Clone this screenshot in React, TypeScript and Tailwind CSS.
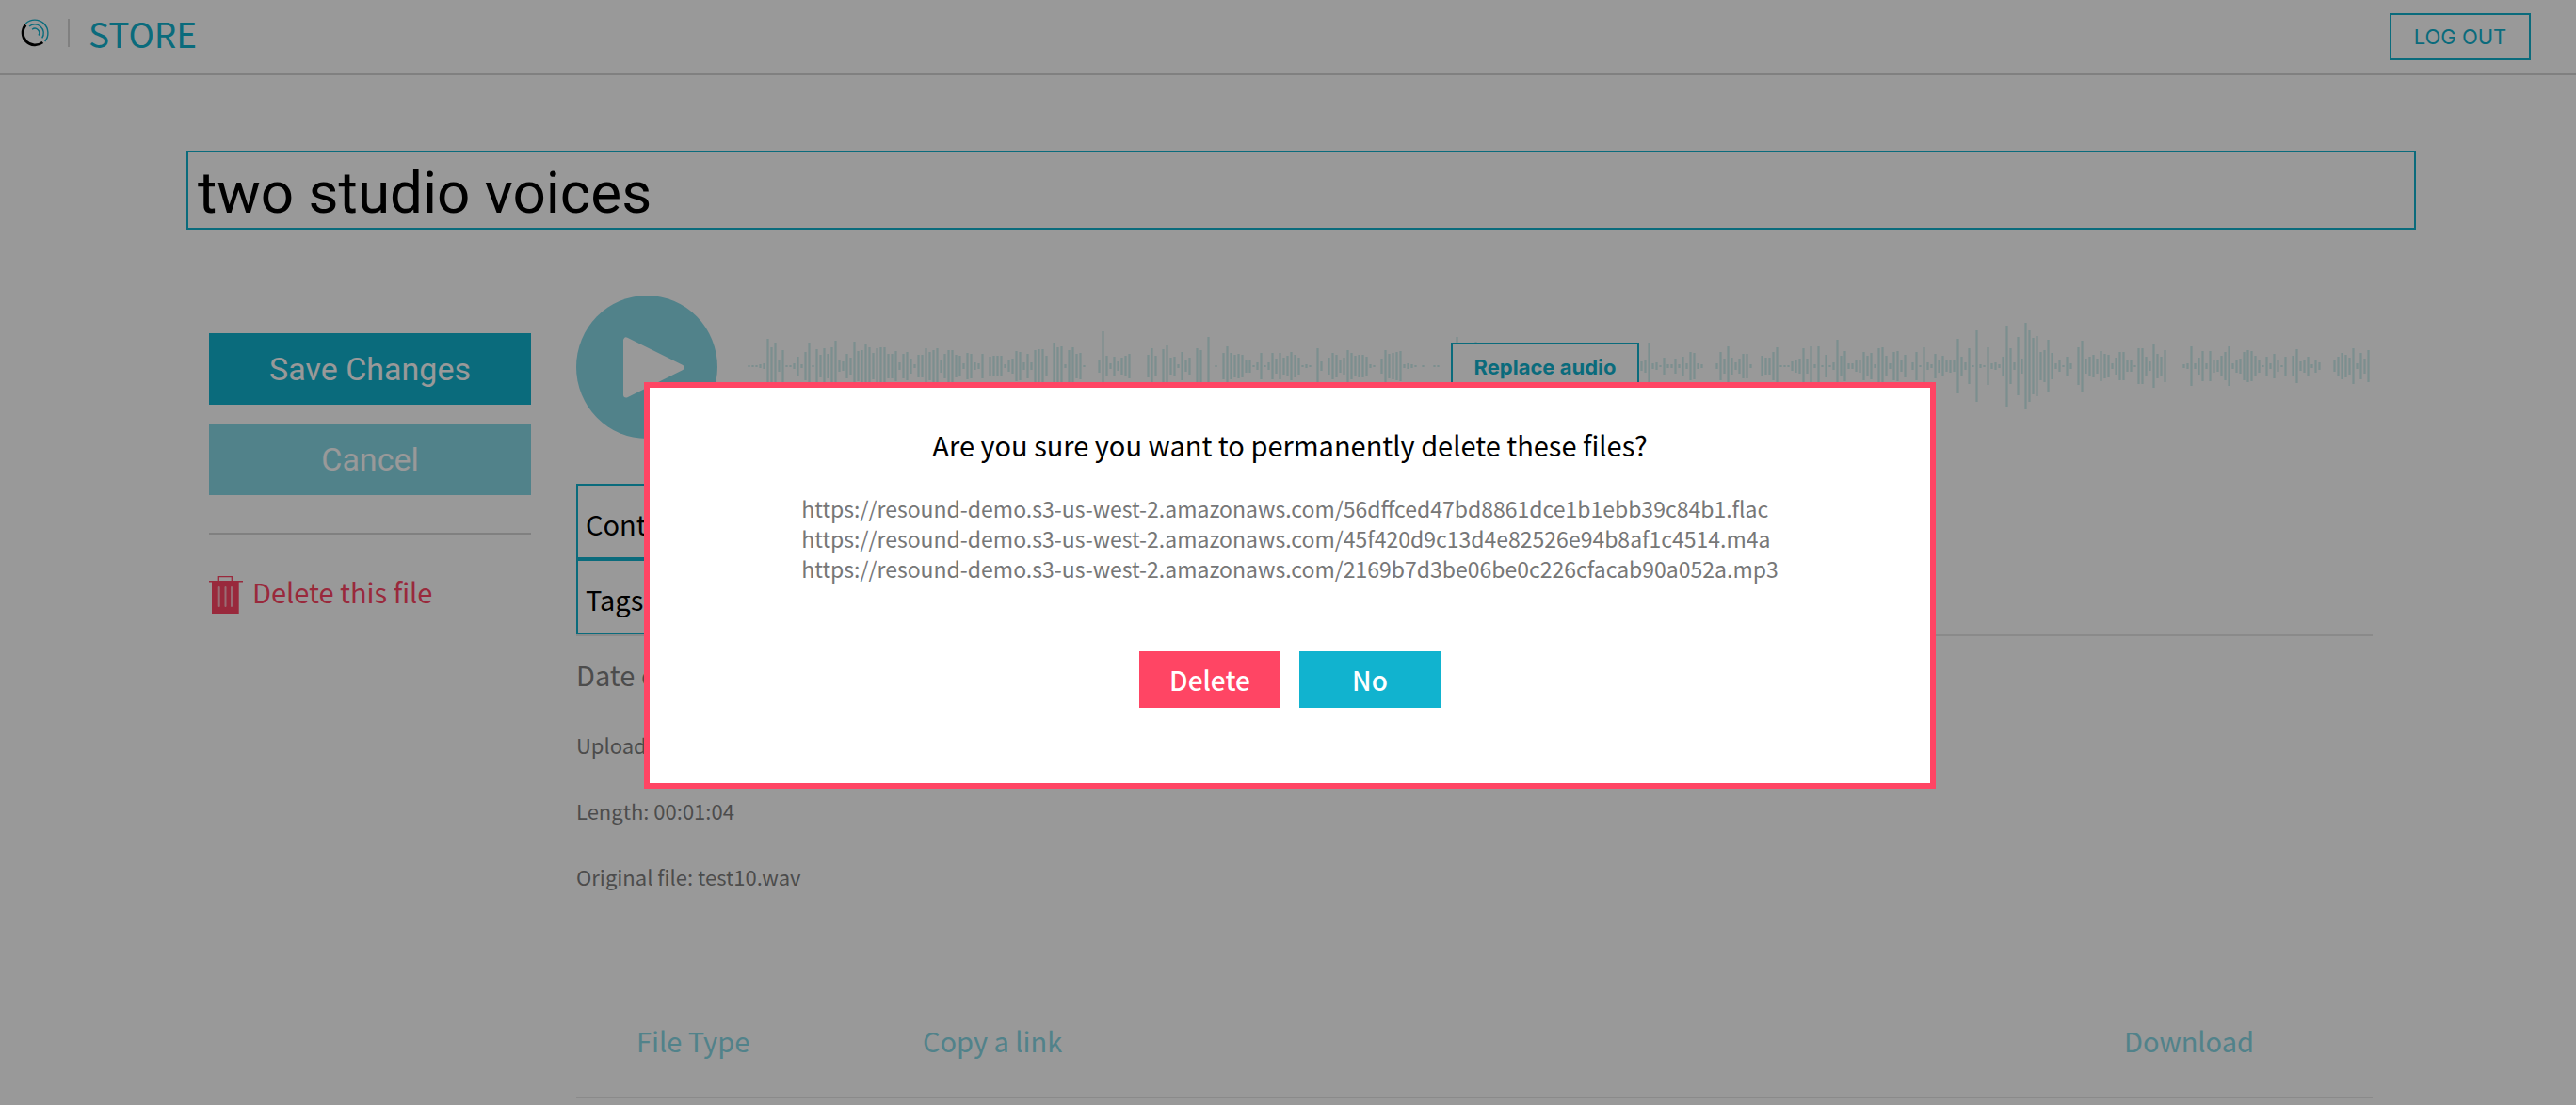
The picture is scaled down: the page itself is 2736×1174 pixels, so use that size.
import type { ReactNode } from "react";

const SANS = "font-['Noto_Sans_CJK_SC',sans-serif]";
const UI = "font-['Inter',sans-serif]";
const DISPLAY = "font-['Roboto',sans-serif]";

/* Half the height of every bar of the wave form, from left to right. */
const PEAKS = [
  1, 1, 1, 2, 3, 29, 20, 25, 6, 17, 1, 1, 3, 10, 2, 15, 25, 1, 18, 12, 19, 13, 20, 27, 6, 5, 13, 9, 26, 16, 17, 23, 20, 14,
  19, 20, 20, 13, 13, 16, 4, 13, 15, 8, 2, 12, 12, 19, 15, 17, 19, 7, 13, 17, 17, 12, 11, 3, 14, 13, 4, 3, 13, 0, 10, 11,
  11, 11, 2, 6, 8, 16, 15, 4, 13, 4, 17, 18, 18, 11, 0, 25, 20, 21, 2, 17, 20, 13, 14, 1, 0, 0, 0, 7, 37, 11, 3, 10, 5, 9,
  11, 13, 0, 0, 0, 0, 12, 19, 11, 0, 18, 22, 9, 10, 2, 15, 6, 9, 0, 19, 17, 0, 31, 0, 1, 0, 14, 21, 14, 12, 13, 12, 7, 7,
  1, 4, 14, 1, 4, 14, 8, 14, 9, 11, 15, 12, 9,
  1, 2, 1, 0, 19, 5, 0, 9, 14, 12, 7, 9, 17, 14, 11, 12, 12, 10, 2, 1, 0, 8, 17, 13, 14, 15, 16, 2, 3, 2, 1, 0, 1, 0, 0,
  1, 1, 0, 0, 0, 8, 31, 12, 9, 14, 10, 26, 12, 8, 16, 20, 11, 6, 3, 9, 14, 18, 12, 7, 2, 5, 11, 16, 19, 13, 9, 4, 2, 8,
  12, 15, 10, 6, 3, 1, 4, 9, 13, 17, 11, 7, 3, 6, 10, 14, 9, 5, 8, 12, 6,
  5, 7, 25, 3, 4, 1, 9, 2, 2, 8, 2, 10, 3, 15, 14, 3, 2, 0, 0, 0, 3, 15, 8, 21, 9, 4, 8, 13, 13, 2, 0, 0, 11, 9, 9, 15,
  20, 1, 1, 1, 5, 7, 8, 19, 8, 21, 2, 21, 1, 12, 1, 4, 28, 11, 16, 3, 3, 6, 7, 15,
  11, 14, 2, 19, 20, 11, 3, 15, 16, 6, 12, 0, 4, 15, 1, 20, 4, 2, 13, 7, 11, 6, 7, 6, 29, 10, 4, 19, 1, 38, 2, 1, 20, 3,
  4, 2, 10, 43, 19, 4, 31, 8, 46, 38, 30, 32, 15, 17, 28, 14, 3, 6, 1, 10, 3, 0, 20, 27, 8, 10, 12, 8, 16, 13, 12, 3, 9,
  15, 15, 6, 6, 1, 19, 19, 10, 5, 23, 13, 10, 17, 0, 0, 0, 0, 2, 3, 21, 3, 9, 16, 3, 16, 7, 6, 11, 15, 21, 3, 7, 8, 15,
  17, 16, 11, 7, 1, 10, 3, 13, 6, 1, 10, 0, 11, 18, 5, 7, 10, 2, 7, 4, 0, 0, 0, 6, 10, 14, 12, 9, 19, 3, 14, 8, 17,
];

function Logo() {
  return (
    <svg viewBox="0 0 30 30" className="h-[30px] w-[30px]" fill="none" aria-hidden="true">
      <g transform="translate(1 0)">
        <path d="M4.300 4.900A14 14 0 0 1 24.700 24" stroke="#11b3cf" strokeWidth="1.4" />
        <path d="M8 8A9.300 9.300 0 0 1 21.700 20.300" stroke="#11b3cf" strokeWidth="1.4" />
        <path d="M11.100 11.300A4.700 4.700 0 0 1 18 17.500" stroke="#11b3cf" strokeWidth="1.4" />
        <path d="M4.200 6.500A13 13 0 0 0 22.300 25" stroke="#000" strokeWidth="2.8" />
      </g>
    </svg>
  );
}

function TrashIcon() {
  return (
    <svg viewBox="0 0 36 40" className="h-10 w-9" aria-hidden="true">
      <path d="M10.3 5.5V.7h14v4.8" fill="none" stroke="#ff4564" strokeWidth="1.3" />
      <path d="M0 5h36v1.4h-4.3V40H3V6.4H0z" fill="#ff4564" />
      <path d="M10.7 12v20M17.5 12v20M24 12v20" stroke="#ffb5c1" strokeWidth="2" strokeLinecap="round" />
    </svg>
  );
}

function PlayIcon() {
  return (
    <svg viewBox="0 0 150 152" className="h-[152px] w-[150px]" aria-hidden="true">
      <ellipse cx="75" cy="76" rx="75" ry="76" fill="#88d9e7" />
      <path d="M53 47.5v58L111.500 76.500z" fill="#fff" stroke="#fff" strokeWidth="6" strokeLinejoin="round" />
    </svg>
  );
}

function Waveform() {
  return (
    <svg viewBox="0 0 1726 100" preserveAspectRatio="none" className="h-[100px] w-full" shapeRendering="crispEdges" aria-hidden="true">
      {PEAKS.map((h, i) => (
        <g key={i}>
          <rect x={i * 4} y={49 - h} width="3" height={h * 2} fill="#e1f3f3" />
          <rect x={i * 4 + 1} y={49 - h} width="1" height={h * 2} fill="#cdefef" />
        </g>
      ))}
    </svg>
  );
}

function Detail({ children }: { children: ReactNode }) {
  return <p className="text-[22px] leading-[70px] text-[#7f7f7f]">{children}</p>;
}

const fieldClass =
  "block h-20 w-1/2 border-2 border-[#11b3cf] bg-white px-2 pt-1 text-[29px] text-black outline-none placeholder:text-black placeholder:opacity-100";

const files = [
  "https://resound-demo.s3-us-west-2.amazonaws.com/56dffced47bd8861dce1b1ebb39c84b1.flac",
  "https://resound-demo.s3-us-west-2.amazonaws.com/45f420d9c13d4e82526e94b8af1c4514.m4a",
  "https://resound-demo.s3-us-west-2.amazonaws.com/2169b7d3be06be0c226cfacab90a052a.mp3",
];

export default function App() {
  return (
    <div className={`min-h-screen bg-white text-black ${SANS}`}>
      <header className="flex h-20 items-center justify-between border-b-2 border-[#d5d5d5] pr-12 pl-[22px]">
        <div className="flex items-center gap-5 pb-2">
          <Logo />
          <div className="h-[30px] w-0.5 bg-[#d5d5d5]" />
          <a href="#store" className="text-[37px] leading-[30px] text-[#11b3cf]">STORE</a>
        </div>
        <button type="button" className={`h-[50px] w-[150px] border-2 border-[#11b3cf] text-[22px] text-[#11b3cf] ${UI}`}>
          LOG OUT
        </button>
      </header>

      <div className="mt-20 mr-[170px] ml-[198px]">
        <input
          aria-label="Title"
          defaultValue="two studio voices"
          className={`block h-[84px] w-full border-2 border-[#11b3cf] bg-white px-2.5 pt-1 text-[62px] outline-none ${DISPLAY}`}
        />
      </div>

      <main className="mt-[70px] mr-[216px] ml-[222px] flex gap-12">
        <aside className="w-[342px] shrink-0 pt-10">
          <div className={`flex flex-col gap-5 text-[34px] text-white ${DISPLAY}`}>
            <button type="button" className="h-[76px] bg-[#11b3cf]">Save Changes</button>
            <button type="button" className="h-[76px] bg-[#88d9e7]">Cancel</button>
          </div>
          <hr className="mt-10 border-t-2 border-[#d5d5d5]" />
          <button type="button" className="mt-11 flex items-start gap-2.5 text-[29px] leading-8 text-[#ff4564]">
            <TrashIcon />
            Delete this file
          </button>
        </aside>

        <section className="min-w-0 flex-1">
          <div className="flex items-center">
            <button type="button" aria-label="Play" className="shrink-0">
              <PlayIcon />
            </button>
            <div className="relative min-w-0 flex-1 pl-8">
              <Waveform />
              <div className="absolute inset-0 flex items-center justify-center">
                <button type="button" className={`h-[52px] w-[200px] border-2 border-[#11b3cf] bg-white text-[22px] font-bold text-[#11b3cf] ${UI}`}>
                  Replace audio
                </button>
              </div>
            </div>
          </div>

          <div className="mt-12 border-b-2 border-[#e6e6e6]">
            <input aria-label="Contributors" placeholder="Contributors" className={fieldClass} />
            <input aria-label="Tags" placeholder="Tags" className={fieldClass} />
          </div>
          <p className="text-[29px] leading-[80px] text-[#7f7f7f]">Date created</p>
          <Detail>Uploaded</Detail>
          <Detail>Length: 00:01:04</Detail>
          <Detail>Original file: test10.wav</Detail>

          <table className="mt-20 w-full table-fixed border-b-2 border-[#e6e6e6] text-[29px] text-[#88d9e7]">
            <thead>
              <tr className="h-[120px]">
                <th scope="col" className="w-[304px] pl-16 text-left font-normal">File Type</th>
                <th scope="col" className="pl-16 text-left font-normal">Copy a link</th>
                <th scope="col" className="w-[390px] text-center font-normal">Download</th>
              </tr>
            </thead>
          </table>
        </section>
      </main>

      <div className="fixed inset-0 flex items-start justify-center bg-black/40 pt-[406px] pl-1">
        <div
          role="dialog"
          aria-modal="true"
          aria-labelledby="confirm-title"
          className="flex w-[calc(50%+6px)] flex-col items-center border-6 border-[#ff4564] bg-white pt-10 pb-20"
        >
          <h2 id="confirm-title" className="text-[29px] leading-10 font-normal">
            Are you sure you want to permanently delete these files?
          </h2>
          <ul className="mt-8 text-[23px] leading-8 text-[#777777]">
            {files.map((f) => (
              <li key={f}>{f}</li>
            ))}
          </ul>
          <div className="mt-[72px] flex gap-5 text-[28px] font-medium text-white">
            <button type="button" className="h-[60px] w-[150px] bg-[#ff4564]">Delete</button>
            <button type="button" className="h-[60px] w-[150px] bg-[#11b3cf]">No</button>
          </div>
        </div>
      </div>
    </div>
  );
}
